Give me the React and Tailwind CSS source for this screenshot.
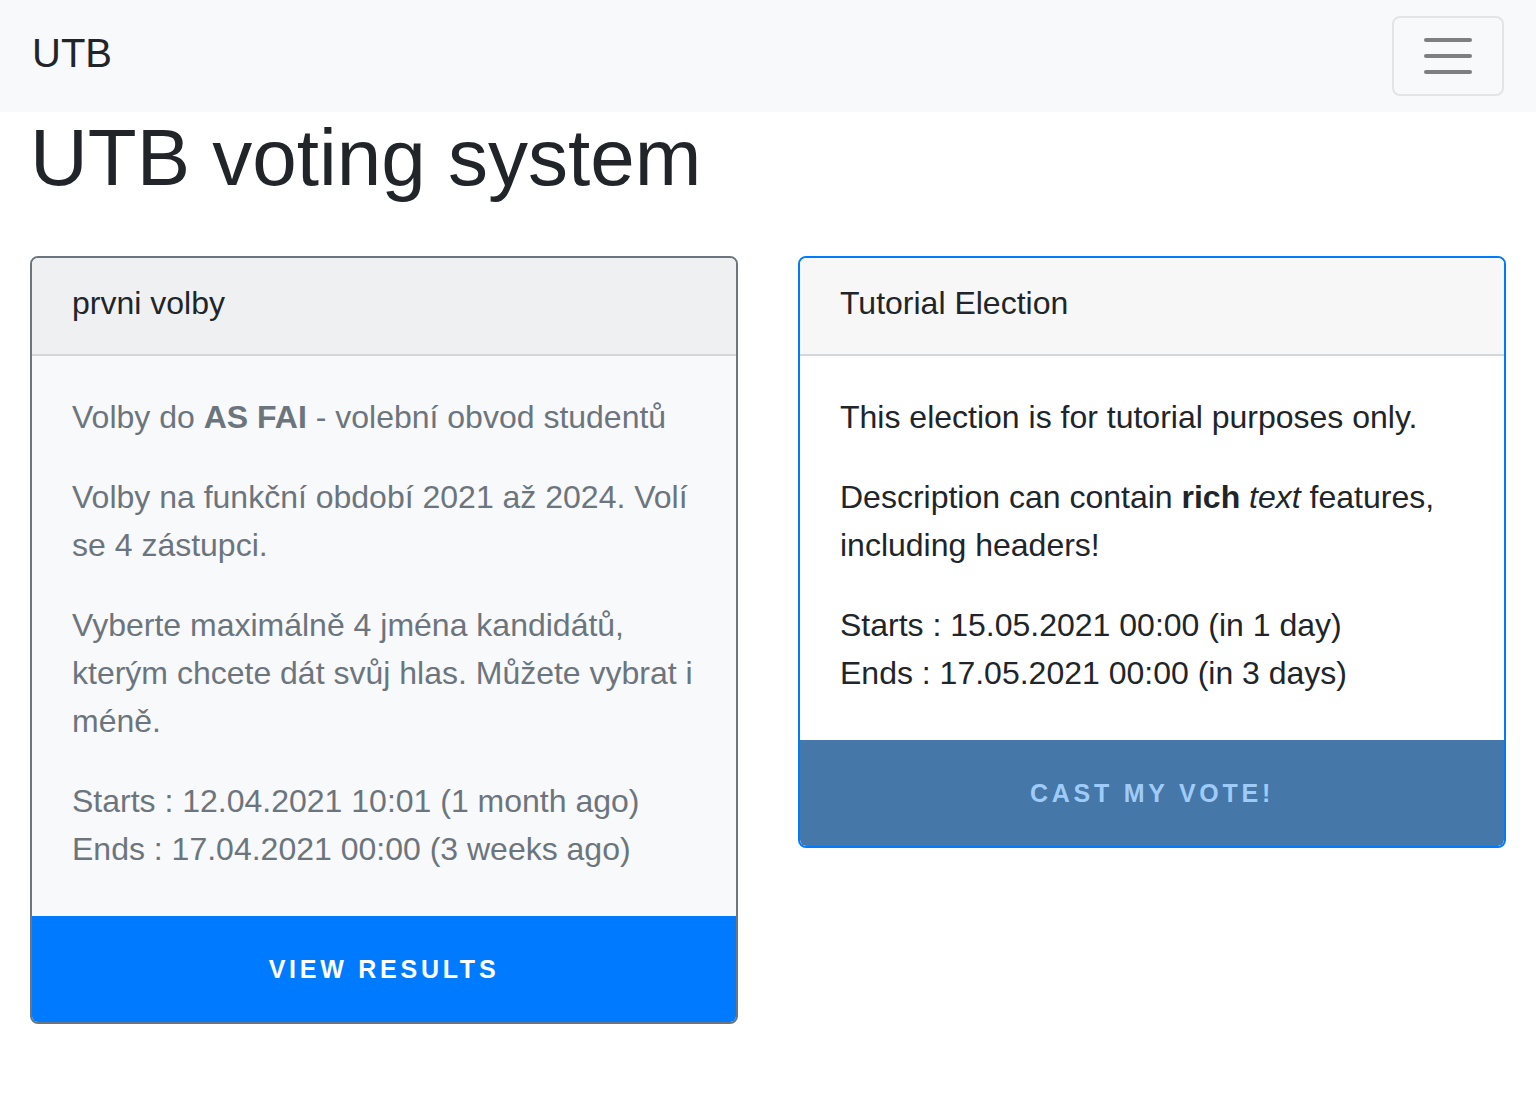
import React from "react";

const font = { fontFamily: '"Liberation Sans", Arial, sans-serif' };

const ElectionCard = ({ title, variant, children, button }) => {
  const past = variant === "past";
  return (
    <div
      className={`flex flex-col rounded-lg border-2 overflow-hidden ${
        past ? "border-[#6c757d] bg-[#f8f9fa]" : "border-[#007bff] bg-white"
      }`}
    >
      {/* Header */}
      <div
        className={`px-10 pt-[21px] pb-[27px] border-b-2 border-[#d5d6d7] text-[32px] leading-[48px] text-[#212529] ${
          past ? "bg-[#eff0f1]" : "bg-[#f7f7f7]"
        }`}
      >
        {title}
      </div>

      {/* Body */}
      <div
        className={`px-10 pt-[37px] pb-[43px] text-[32px] leading-[48px] ${
          past ? "text-[#6c757d]" : "text-[#212529]"
        }`}
      >
        {children}
      </div>

      {/* Action */}
      <button
        className={`h-[106px] w-full pt-[2px] uppercase font-bold text-[25px] tracking-[0.15em] ${
          past ? "bg-[#007bff] text-white" : "bg-[#4577a8] text-[#9fcbf8] rounded-b-md"
        }`}
      >
        {button}
      </button>
    </div>
  );
};

export default function App() {
  return (
    <div className="min-h-screen bg-white" style={font}>
      {/* Navbar */}
      <nav className="h-[112px] bg-[#f8f9fa] flex items-center justify-between pl-8 pr-8">
        <span className="text-[40px] leading-none text-[#212529] pb-[6px]">UTB</span>
        <button className="w-[112px] h-[80px] rounded-lg border-2 border-[#e3e4e5] flex flex-col items-center justify-center gap-[12px]">
          <span className="block w-[48px] h-[4px] rounded bg-[#7f7f7f]" />
          <span className="block w-[48px] h-[4px] rounded bg-[#7f7f7f]" />
          <span className="block w-[48px] h-[4px] rounded bg-[#7f7f7f]" />
        </button>
      </nav>

      <div className="px-[30px]">
        <h1 className="text-[80px] leading-[92px] pb-[4px] text-[#212529]">UTB voting system</h1>

        <div className="mt-[48px] grid grid-cols-2 gap-[60px] items-start">
          <ElectionCard title="prvni volby" variant="past" button="View results">
            <p className="mb-8">
              Volby do <b>AS FAI</b> - volební obvod studentů
            </p>
            <p className="mb-8">Volby na funkční období 2021 až 2024. Volí se 4 zástupci.</p>
            <p className="mb-8">
              Vyberte maximálně 4 jména kandidátů, kterým chcete dát svůj hlas. Můžete vybrat i méně.
            </p>
            <p>
              Starts : 12.04.2021 10:01 (1 month ago)
              <br />
              Ends : 17.04.2021 00:00 (3 weeks ago)
            </p>
          </ElectionCard>

          <ElectionCard title="Tutorial Election" variant="active" button="Cast my vote!">
            <p className="mb-8">This election is for tutorial purposes only.</p>
            <p className="mb-8">
              Description can contain <b>rich</b> <i>text</i> features, including headers!
            </p>
            <p>
              Starts : 15.05.2021 00:00 (in 1 day)
              <br />
              Ends : 17.05.2021 00:00 (in 3 days)
            </p>
          </ElectionCard>
        </div>
      </div>
    </div>
  );
}
